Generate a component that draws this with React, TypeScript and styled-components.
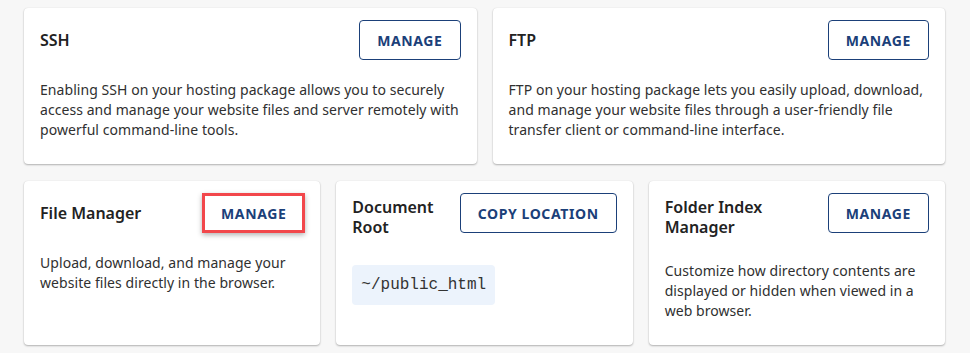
import React from "react";
import styled, { createGlobalStyle, css } from "styled-components";

const GlobalStyle = createGlobalStyle`
  html, body {
    margin: 0;
    padding: 0;
    background: #f7f7f7;
  }
  body {
    font-family: "Noto Sans", "Open Sans", Arial, sans-serif;
    -webkit-font-smoothing: antialiased;
  }
  * { box-sizing: border-box; }
`;

const Page = styled.main`
  display: flex;
  flex-direction: column;
  gap: 17px;
  padding: 8px 25px 8px 24px;
`;

const Row = styled.div<{ $cols: number }>`
  display: grid;
  grid-template-columns: repeat(${(p) => p.$cols}, minmax(0, 1fr));
  gap: 16px;
`;

const Card = styled.section`
  display: flex;
  flex-direction: column;
  align-items: stretch;
  background: #ffffff;
  border-radius: 4px;
  padding: 16px 16px 24px;
  box-shadow: 0 1px 2px rgba(0, 0, 0, 0.28), 0 0 1px rgba(0, 0, 0, 0.12);
`;

const Header = styled.div`
  display: flex;
  align-items: center;
  justify-content: space-between;
  gap: 16px;
  min-height: 32px;
`;

const Title = styled.h3`
  flex: 1 1 auto;
  min-width: 0;
  margin: 0;
  font-family: "Noto Sans", "Open Sans", Arial, sans-serif;
  font-size: 16px;
  line-height: 20px;
  font-weight: 600;
  color: #222222;
`;

const Button = styled.button<{ $highlight?: boolean }>`
  flex: 0 0 auto;
  align-self: flex-start;
  margin: -4px 0;
  height: 40px;
  padding: 0 17px;
  background: #ffffff;
  border: 1px solid #1b4079;
  border-radius: 4px;
  font-family: "Noto Sans", "Open Sans", Arial, sans-serif;
  font-size: 14px;
  font-weight: 700;
  letter-spacing: 0.6px;
  text-transform: uppercase;
  color: #1b4079;
  cursor: pointer;
  white-space: nowrap;
  ${(p) =>
    p.$highlight &&
    css`
      border: 3px solid #f2474b;
      border-radius: 0;
      padding: 0 16px;
      margin-right: -1px;
      box-shadow: 0 2px 5px rgba(0, 0, 0, 0.3);
    `}
`;

const Description = styled.p`
  margin: 24px 0 0;
  font-family: "Noto Sans", "Open Sans", Arial, sans-serif;
  font-size: 14px;
  line-height: 20px;
  letter-spacing: 0.06px;
  color: #303030;
`;

const CodeBlock = styled.code`
  align-self: flex-start;
  margin-top: 28px;
  height: 40px;
  padding: 0 9px;
  background: #ecf3fc;
  border-radius: 4px;
  font-family: "Liberation Mono", "Courier New", monospace;
  font-size: 16px;
  line-height: 40px;
  color: #333333;
`;

type CardInfo = {
  title: string;
  action: string;
  text?: string;
  code?: string;
  highlight?: boolean;
};

const topRow: CardInfo[] = [
  {
    title: "SSH",
    action: "Manage",
    text:
      "Enabling SSH on your hosting package allows you to securely access and manage your website files and server remotely with powerful command-line tools.",
  },
  {
    title: "FTP",
    action: "Manage",
    text:
      "FTP on your hosting package lets you easily upload, download, and manage your website files through a user-friendly file transfer client or command-line interface.",
  },
];

const bottomRow: CardInfo[] = [
  {
    title: "File Manager",
    action: "Manage",
    highlight: true,
    text: "Upload, download, and manage your website files directly in the browser.",
  },
  {
    title: "Document Root",
    action: "Copy Location",
    code: "~/public_html",
  },
  {
    title: "Folder Index Manager",
    action: "Manage",
    text:
      "Customize how directory contents are displayed or hidden when viewed in a web browser.",
  },
];

function ToolCard({ info }: { info: CardInfo }) {
  return (
    <Card>
      <Header>
        <Title>{info.title}</Title>
        <Button type="button" $highlight={info.highlight}>
          {info.action}
        </Button>
      </Header>
      {info.text && <Description>{info.text}</Description>}
      {info.code && <CodeBlock>{info.code}</CodeBlock>}
    </Card>
  );
}

export default function App() {
  return (
    <>
      <GlobalStyle />
      <Page>
        <Row $cols={2}>
          {topRow.map((c) => (
            <ToolCard key={c.title} info={c} />
          ))}
        </Row>
        <Row $cols={3}>
          {bottomRow.map((c) => (
            <ToolCard key={c.title} info={c} />
          ))}
        </Row>
      </Page>
    </>
  );
}
